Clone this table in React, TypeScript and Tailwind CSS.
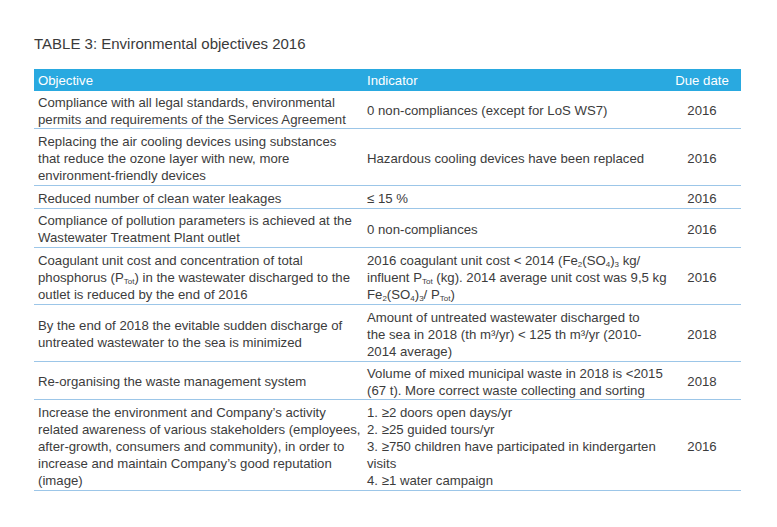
import React from "react";

const S = ({ children }: { children: React.ReactNode }) => (
  <sub className="text-[8px]">{children}</sub>
);

type Row = { o: React.ReactNode; i: React.ReactNode; d: string; h: string };

const rows: Row[] = [
  {
    h: "h-[38px]",
    o: (
      <>
        Compliance with all legal standards, environmental
        <br />
        permits and requirements of the Services Agreement
      </>
    ),
    i: <>0 non-compliances (except for LoS WS7)</>,
    d: "2016",
  },
  {
    h: "h-[57px]",
    o: (
      <>
        Replacing the air cooling devices using substances
        <br />
        that reduce the ozone layer with new, more
        <br />
        environment-friendly devices
      </>
    ),
    i: <>Hazardous cooling devices have been replaced</>,
    d: "2016",
  },
  {
    h: "h-[23px]",
    o: <>Reduced number of clean water leakages</>,
    i: <>≤ 15 %</>,
    d: "2016",
  },
  {
    h: "h-[39px]",
    o: (
      <>
        Compliance of pollution parameters is achieved at the
        <br />
        Wastewater Treatment Plant outlet
      </>
    ),
    i: <>0 non-compliances</>,
    d: "2016",
  },
  {
    h: "h-[57px]",
    o: (
      <>
        Coagulant unit cost and concentration of total
        <br />
        phosphorus (P<S>Tot</S>) in the wastewater discharged to the
        <br />
        outlet is reduced by the end of 2016
      </>
    ),
    i: (
      <>
        2016 coagulant unit cost &lt; 2014 (Fe<S>2</S>(SO<S>4</S>)<S>3</S> kg/
        <br />
        influent P<S>Tot</S> (kg). 2014 average unit cost was 9,5 kg
        <br />
        Fe<S>2</S>(SO<S>4</S>)<S>3</S>/ P<S>Tot</S>)
      </>
    ),
    d: "2016",
  },
  {
    h: "h-[57px]",
    o: (
      <>
        By the end of 2018 the evitable sudden discharge of
        <br />
        untreated wastewater to the sea is minimized
      </>
    ),
    i: (
      <>
        Amount of untreated wastewater discharged to
        <br />
        the sea in 2018 (th m³/yr) &lt; 125 th m³/yr (2010-
        <br />
        2014 average)
      </>
    ),
    d: "2018",
  },
  {
    h: "h-[38px]",
    o: <>Re-organising the waste management system</>,
    i: (
      <>
        Volume of mixed municipal waste in 2018 is &lt;2015
        <br />
        (67 t). More correct waste collecting and sorting
      </>
    ),
    d: "2018",
  },
  {
    h: "h-[91px]",
    o: (
      <>
        Increase the environment and Company’s activity
        <br />
        related awareness of various stakeholders (employees,
        <br />
        after-growth, consumers and community), in order to
        <br />
        increase and maintain Company’s good reputation
        <br />
        (image)
      </>
    ),
    i: (
      <>
        1. ≥2 doors open days/yr
        <br />
        2. ≥25 guided tours/yr
        <br />
        3. ≥750 children have participated in kindergarten
        <br />
        visits
        <br />
        4. ≥1 water campaign
      </>
    ),
    d: "2016",
  },
];

export default function App() {
  return (
    <div
      className="w-[777px] h-[527px] bg-white text-[#3c3c3c] pl-[34px] pt-[35px]"
      style={{ fontFamily: '"Liberation Sans", Arial, sans-serif' }}
    >
      <div className="text-[15px] leading-[18px] text-[#3a3a3a]">
        TABLE 3: Environmental objectives 2016
      </div>
      <div className="mt-[16px] w-[707px] text-[13.2px] leading-[17px]">
        <div className="grid grid-cols-[329px_300px_78px] bg-[#29a9e0] text-white h-[22px] items-center">
          <div className="pl-[4px]">Objective</div>
          <div className="pl-[4px]">Indicator</div>
          <div className="text-center">Due date</div>
        </div>
        {rows.map((r, k) => (
          <div
            key={k}
            className={`grid grid-cols-[329px_300px_78px] items-center border-b border-[#9cc6e8] pt-[2px] ${r.h}`}
          >
            <div className="pl-[4px] whitespace-nowrap">{r.o}</div>
            <div className="pl-[4px] whitespace-nowrap">{r.i}</div>
            <div className="text-center">{r.d}</div>
          </div>
        ))}
      </div>
    </div>
  );
}
